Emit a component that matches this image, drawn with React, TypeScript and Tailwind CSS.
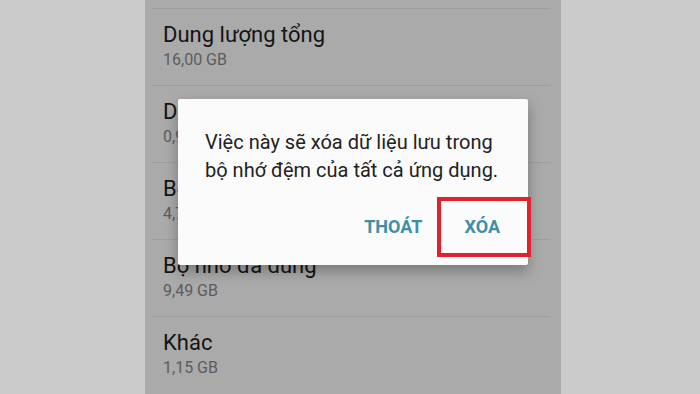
import React from "react";

const rows = [
  { label: "Dung lượng tổng", sub: "16,00 GB" },
  { label: "Dung lượng hệ thống", sub: "0,92 GB" },
  { label: "Bộ nhớ còn trống", sub: "4,78 GB" },
  { label: "Bộ nhớ đã dùng", sub: "9,49 GB" },
  { label: "Khác", sub: "1,15 GB" },
];

export default function App() {
  return (
    <div
      className="relative w-[700px] h-[394px] overflow-hidden bg-[#cbcbcb] pl-[145px]"
      style={{ fontFamily: "Roboto, 'Noto Sans', sans-serif" }}
    >
      <div className="w-[416px] h-full bg-[#aaaaaa] flex flex-col">
        <div className="h-[8px] shrink-0" />
        {rows.map((r) => (
          <div key={r.label} className="shrink-0">
            <div className="h-px ml-[6px] mr-[11px] bg-[#9e9e9e]" />
            <div className="h-[76px] pl-[18px] pt-[12px]">
              <div className="text-[22px] leading-[28px] text-[#141414]">{r.label}</div>
              <div className="text-[16px] leading-[20px] mt-[1px] text-[#5c5c5c]">{r.sub}</div>
            </div>
          </div>
        ))}
      </div>

      <div className="absolute left-[178px] top-[99px] w-[350px] h-[166px] bg-[#fbfbfb] rounded-[2px] shadow-[0_6px_14px_rgba(0,0,0,0.3)] flex flex-col">
        <div className="pl-[27px] pt-[29px] text-[20px] leading-[28px] text-[#222222]">
          <div>Việc này sẽ xóa dữ liệu lưu trong</div>
          <div>bộ nhớ đệm của tất cả ứng dụng.</div>
        </div>
        <div className="mt-[33px] flex justify-end gap-[42px] pr-[28px] text-[18px] leading-[20px] font-bold text-[#3f8fa7]">
          <span>THOÁT</span>
          <span className="relative">
            XÓA
            <span className="absolute -left-[27px] -top-[20px] -right-[31px] -bottom-[20px] border-[4px] border-[#e3212d]" />
          </span>
        </div>
      </div>
    </div>
  );
}
